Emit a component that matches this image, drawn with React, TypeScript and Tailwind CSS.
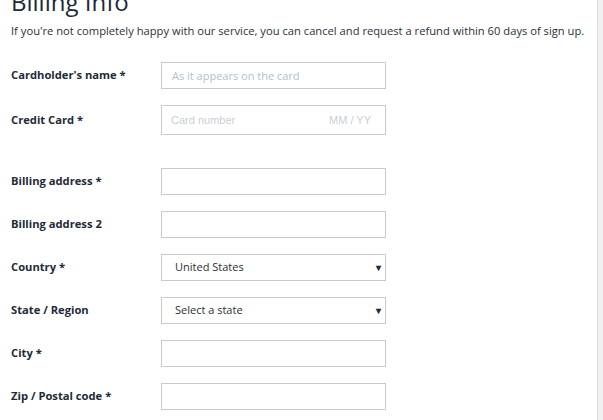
import React from 'react'

const font = { fontFamily: '"Open Sans", "Noto Sans", sans-serif' }

function Row({ label, children, className = '' }: { label: string; children: React.ReactNode; className?: string }) {
  return (
    <div className={`flex items-center ${className}`}>
      <label className="w-[150px] shrink-0 text-[11.2px] font-bold text-[#1e2b38]">{label}</label>
      {children}
    </div>
  )
}

function TextInput({ placeholder = '' }: { placeholder?: string }) {
  return (
    <input
      type="text"
      placeholder={placeholder}
      className="w-[225px] h-[27px] border border-[#cacaca] bg-white px-[10px] text-[11px] text-[#333] placeholder:text-[#b3c0d3] outline-none"
    />
  )
}

function SelectBox({ value }: { value: string }) {
  return (
    <div className="relative w-[225px] h-[27px] border border-[#cacaca] bg-white flex items-center">
      <span className="pl-[13px] text-[11px] text-[#2a2f35]">{value}</span>
      <span className="absolute right-[4px] top-[5px] text-[10px] leading-[14px] font-bold text-[#1e2b38]">▾</span>
    </div>
  )
}

export default function App() {
  return (
    <div className="flex w-[603px] h-[420px] overflow-hidden bg-white" style={font}>
      <div className="w-[598px] shrink-0 border-r border-[#dcdcdc] pl-[11px]">
        <h1 className="mt-[-13px] text-[24px] leading-[29px] font-normal text-[#1b2a3a]">Billing Info</h1>
        <p className="mt-[7px] text-[11.2px] leading-[16px] text-[#2b3138] whitespace-nowrap">
          If you're not completely happy with our service, you can cancel and request a refund within 60 days of sign up.
        </p>

        <div className="mt-[23px] flex flex-col">
          <Row label="Cardholder's name *" className="mb-[16px]">
            <TextInput placeholder="As it appears on the card" />
          </Row>
          <Row label="Credit Card *" className="mb-[33px]">
            <div
              className="w-[225px] h-[30px] border border-[#cacaca] bg-white flex items-center justify-between px-[9px] text-[11px] text-[#c9cfd7]"
              style={{ fontFamily: '"Liberation Sans", Arial, sans-serif' }}
            >
              <span>Card number</span>
              <span className="pr-[5px]">MM / YY</span>
            </div>
          </Row>
          <Row label="Billing address *" className="mb-[16px]">
            <TextInput />
          </Row>
          <Row label="Billing address 2" className="mb-[16px]">
            <TextInput />
          </Row>
          <Row label="Country *" className="mb-[16px]">
            <SelectBox value="United States" />
          </Row>
          <Row label="State / Region" className="mb-[16px]">
            <SelectBox value="Select a state" />
          </Row>
          <Row label="City *" className="mb-[16px]">
            <TextInput />
          </Row>
          <Row label="Zip / Postal code *">
            <TextInput />
          </Row>
        </div>
      </div>
      <div className="flex-1 bg-[#f1f1f1]" />
    </div>
  )
}
